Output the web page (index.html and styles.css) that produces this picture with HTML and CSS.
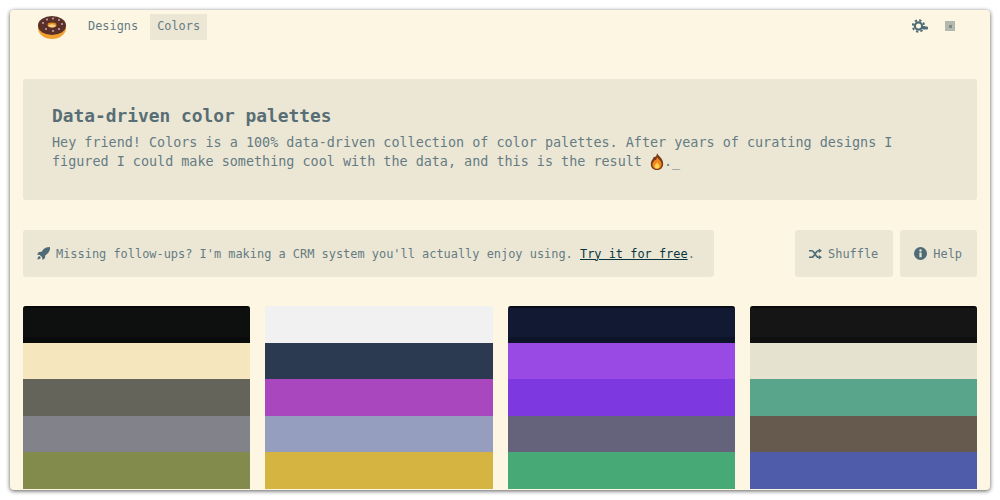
FILE: index.html
```html
<!DOCTYPE html>
<html lang="en">

<head>
    <meta charset="UTF-8">
    <meta name="viewport" content="width=device-width, initial-scale=1.0">
    <title>Colors</title>
    <link rel="stylesheet" href="styles.css">
</head>

<body>
    <div class="window">
        <!-- Nav -->
        <div class="nav">
            <svg class="logo" viewBox="0 0 30 24" width="30" height="24">
                <ellipse cx="15" cy="13" rx="14" ry="11" fill="#f0a030"/>
                <ellipse cx="15" cy="10.5" rx="14" ry="9.5" fill="#5a3028"/>
                <ellipse cx="15" cy="10" rx="4.5" ry="2.4" fill="#e08a20"/>
                <ellipse cx="15" cy="10.8" rx="3.6" ry="1.6" fill="#fbd08a"/>
                <g fill="#c9a8b0">
                    <circle cx="6" cy="8" r="1"/>
                    <circle cx="10" cy="4.5" r="1"/>
                    <circle cx="16" cy="3.5" r="1"/>
                    <circle cx="22" cy="5" r="1"/>
                    <circle cx="25" cy="9" r="1"/>
                    <circle cx="22" cy="14" r="1"/>
                    <circle cx="16" cy="16" r="1"/>
                    <circle cx="9" cy="14" r="1"/>
                </g>
            </svg>
            <a class="nav-link" href="#">Designs</a>
            <a class="nav-link active" href="#">Colors</a>
            <div class="nav-right">
                <svg class="gear" viewBox="0 0 16 14" width="16" height="14">
                    <circle cx="6.500" cy="7" r="3.600" fill="none" stroke="#4f6b75" stroke-width="2.200"/>
                    <circle cx="6.500" cy="7" r="5.700" fill="none" stroke="#4f6b75" stroke-width="2" stroke-dasharray="2.240 2.240"/>
                    <rect x="10" y="7.500" width="6" height="3" rx="1" fill="#4f6b75"/>
                </svg>
                <span class="dot-box"><span class="dot"></span></span>
            </div>
        </div>

        <!-- Hero -->
        <div class="hero">
            <h1>Data-driven color palettes</h1>
            <p>Hey friend! Colors is a 100% data-driven collection of color palettes. After years of curating designs I figured I could make something cool with the data, and this is the result <svg class="fire" viewBox="0 0 14 18" width="14" height="17"><path fill="#7a3b1c" d="M7 0c1 3 6 5 6.500 10.500C14 15 11 18 7 18s-7-3-6.500-7C1 7 3 7 3.500 4 5 5 7 3 7 0z"/><path fill="#f08a1d" d="M7 4c.5 2 4.500 4 4.800 7.500C12 14.500 10 17 7 17s-5-2.500-4.800-5C2.500 9.500 4 9.500 4.500 7.500 5.500 8 7 6.500 7 4z"/><path fill="#fcd34d" d="M7 10c.5 1 2.500 2 2.500 4 0 1.500-1 2.500-2.500 2.500S4.500 15.500 4.500 14c0-2 2-2.500 2.500-4z"/></svg>._</p>
        </div>

        <!-- Toolbar -->
        <div class="toolbar">
            <div class="promo">
                <svg class="icon" viewBox="0 0 14 14" width="13" height="13">
                    <path fill="#4f6b75" d="M14 0c-4 0-7 1.500-9 5L2 5.500 0 8l3 .5L5.500 11l.5 3 2.500-2 .5-3c3.500-2 5-5 5.500-9zM1.500 10.500C.5 11.500.5 13.500.5 13.500s2 0 3-1c.6-.6.6-1.400 0-2s-1.400-.6-2 0z"/>
                </svg>
                <span>Missing follow-ups? I'm making a CRM system you'll actually enjoy using. <a href="#">Try it for free</a>.</span>
            </div>
            <div class="actions">
                <a class="btn" href="#">
                    <svg class="icon" viewBox="0 0 14 12" width="13" height="12">
                        <path fill="none" stroke="#4f6b75" stroke-width="1.800" d="M0 2.500h3c3 0 4 7 7 7h2M0 9.500h3c3 0 4-7 7-7h2"/>
                        <path fill="#4f6b75" d="M10.500 0 14 2.500 10.500 5zM10.500 7 14 9.500 10.500 12z"/>
                    </svg>
                    Shuffle
                </a>
                <a class="btn" href="#">
                    <svg class="icon" viewBox="0 0 14 14" width="13" height="13">
                        <circle cx="7" cy="7" r="7" fill="#4f6b75"/>
                        <circle cx="7" cy="3.800" r="1.300" fill="#ece7d5"/>
                        <rect x="5.800" y="6" width="2.400" height="5" fill="#ece7d5"/>
                    </svg>
                    Help
                </a>
            </div>
        </div>

        <!-- Palettes -->
        <div class="palettes">
            <div class="palette dark">
                <div class="swatch edge" style="background:#0d100e"></div>
                <div class="swatch" style="background:#f6e6bd"></div>
                <div class="swatch" style="background:#65645a"></div>
                <div class="swatch" style="background:#82828a"></div>
                <div class="swatch" style="background:#828b4b"></div>
            </div>
            <div class="palette">
                <div class="swatch" style="background:#f1f1f1"></div>
                <div class="swatch" style="background:#2b3a51"></div>
                <div class="swatch" style="background:#a947bf"></div>
                <div class="swatch" style="background:#959ebf"></div>
                <div class="swatch" style="background:#d5b441"></div>
            </div>
            <div class="palette dark">
                <div class="swatch edge" style="background:#121933"></div>
                <div class="swatch" style="background:#994ae5"></div>
                <div class="swatch" style="background:#7e38e0"></div>
                <div class="swatch" style="background:#65627b"></div>
                <div class="swatch" style="background:#47a976"></div>
            </div>
            <div class="palette dark">
                <div class="swatch edge" style="background:#151515"></div>
                <div class="swatch" style="background:#e6e2d0"></div>
                <div class="swatch" style="background:#58a58c"></div>
                <div class="swatch" style="background:#665a4f"></div>
                <div class="swatch" style="background:#4f5caa"></div>
            </div>
        </div>
    </div>
</body>

</html>
```

FILE: styles.css
```css
html,
body {
    height: 100%;
    overflow: hidden;
}

body {
    margin: 0;
    background: #fff;
    font-family: 'DejaVu Sans Mono', monospace;
    color: #657b83;
}

a {
    color: inherit;
    text-decoration: none;
}

.window {
    box-sizing: border-box;
    height: 480px;
    margin: 10px 10px 0;
    padding: 4px 13px 0;
    background: #fdf6e3;
    border-radius: 4px;
    box-shadow: 0 1px 4px rgba(0, 0, 0, 0.65);
    overflow: hidden;
}

.nav {
    display: flex;
    align-items: center;
    height: 26px;
}

.logo {
    margin: 0 14px;
}

.nav-link {
    padding: 0 7px;
    line-height: 25px;
    height: 26px;
    font-size: 11.9px;
    font-weight: 500;
    margin-right: 5px;
}

.nav-link.active {
    background: #ece7d5;
}

.nav-right {
    display: flex;
    align-items: center;
    margin-left: auto;
    margin-right: 22px;
    margin-bottom: 2px;
    gap: 17px;
}

.dot-box {
    display: flex;
    align-items: center;
    justify-content: center;
    width: 10px;
    height: 10px;
    background: #b5b9ad;
}

.dot {
    width: 3px;
    height: 3px;
    background: #7d8b88;
}

.hero {
    box-sizing: border-box;
    height: 121px;
    margin-top: 39px;
    padding: 25px 29px;
    background: #ece7d5;
    border-radius: 3px;
}

.hero h1 {
    margin: 0 0 5px;
    font-size: 17.87px;
    line-height: 24px;
    font-weight: 700;
    color: #586e75;
}

.hero p {
    margin: 0;
    font-size: 13.43px;
    line-height: 19px;
}

.fire {
    vertical-align: -4px;
    margin-top: -4px;
}

.toolbar {
    display: flex;
    justify-content: space-between;
    margin-top: 30px;
}

.promo,
.btn {
    display: flex;
    align-items: center;
    gap: 6px;
    height: 47px;
    box-sizing: border-box;
    background: #ece7d5;
    border-radius: 3px;
    font-size: 11.93px;
}

.promo {
    width: 691px;
    padding: 0 14px;
}

.promo a {
    color: #073642;
    text-decoration: underline;
}

.actions {
    display: flex;
    gap: 7px;
}

.btn {
    padding: 0 15px 0 14px;
}

.palettes {
    display: grid;
    grid-template-columns: repeat(4, 1fr);
    gap: 15px;
    margin-top: 29px;
}

.palette {
    overflow: hidden;
}

.palette.dark {
    border-radius: 3px 3px 0 0;
}

.swatch {
    height: 36.500px;
}

.swatch.edge {
    box-shadow: inset 0 2px 0 rgba(0, 0, 0, 0.5), inset 0 -6px 0 rgba(0, 0, 0, 0.2);
}
```
